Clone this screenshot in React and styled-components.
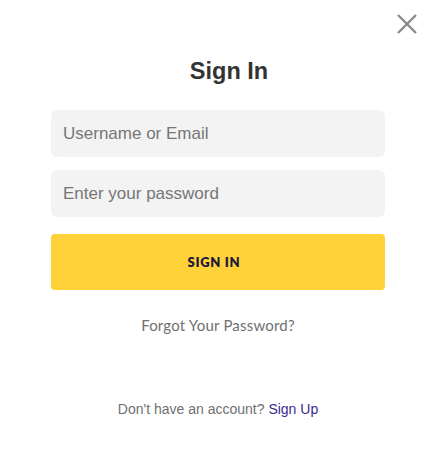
import React from "react";
import styled, { createGlobalStyle } from "styled-components";

const Global = createGlobalStyle`
  html, body { margin: 0; padding: 0; background: #fff; }
  * { box-sizing: border-box; }
`;

const Modal = styled.div`
  position: relative;
  width: 436px;
  height: 452px;
  background: #fff;
  font-family: "Liberation Sans", Arial, sans-serif;
  display: flex;
  flex-direction: column;
  align-items: center;
  padding: 57px 51px 0;
`;

const Close = styled.button`
  position: absolute;
  top: 12px;
  right: 17px;
  width: 24px;
  height: 24px;
  border: 0;
  padding: 0;
  background: none;
  cursor: pointer;
  display: flex;
`;

const Title = styled.h1`
  margin: 0 0 24px 22px;
  font-size: 23.5px;
  line-height: 29px;
  font-weight: 700;
  color: #333;
`;

const Form = styled.form`
  width: 100%;
  display: flex;
  flex-direction: column;
  gap: 13px;
`;

const Input = styled.input`
  width: 100%;
  height: 47px;
  border: 0;
  border-radius: 6px;
  background: #f3f3f3;
  padding: 0 12px;
  font-family: "Liberation Sans", Arial, sans-serif;
  font-size: 17px;
  color: #333;
  outline: none;
  &::placeholder { color: #767676; }
`;

const Button = styled.button`
  margin-top: 4px;
  height: 56px;
  border: 0;
  border-radius: 4px;
  background: #ffd23a;
  color: #1d1938;
  font-family: Lato, "Noto Sans", sans-serif;
  font-weight: 800;
  font-size: 13px;
  letter-spacing: 0.7px;
  padding: 0 8px 0 0;
  cursor: pointer;
`;

const Forgot = styled.a`
  margin-top: 26px;
  font-family: Lato, "Noto Sans", sans-serif;
  font-size: 15px;
  color: #6f6f6f;
  text-decoration: none;
  letter-spacing: 0.2px;
`;

const Footer = styled.p`
  margin: 67px 0 0;
  font-size: 14px;
  color: #6f6f6f;
`;

const SignUp = styled.a`
  color: #3a2a8f;
  text-decoration: none;
`;

export default function App() {
  return (
    <>
      <Global />
      <Modal>
        <Close aria-label="Close">
          <svg width="24" height="24" viewBox="0 0 24 24">
            <path d="M3 3L21 21M21 3L3 21" stroke="#8a8a8a" strokeWidth="2.4" strokeLinecap="butt" />
          </svg>
        </Close>
        <Title>Sign In</Title>
        <Form onSubmit={(e) => e.preventDefault()}>
          <Input placeholder="Username or Email" />
          <Input type="password" placeholder="Enter your password" />
          <Button>SIGN IN</Button>
        </Form>
        <Forgot href="#">Forgot Your Password?</Forgot>
        <Footer>
          Don't have an account? <SignUp href="#">Sign Up</SignUp>
        </Footer>
      </Modal>
    </>
  );
}
